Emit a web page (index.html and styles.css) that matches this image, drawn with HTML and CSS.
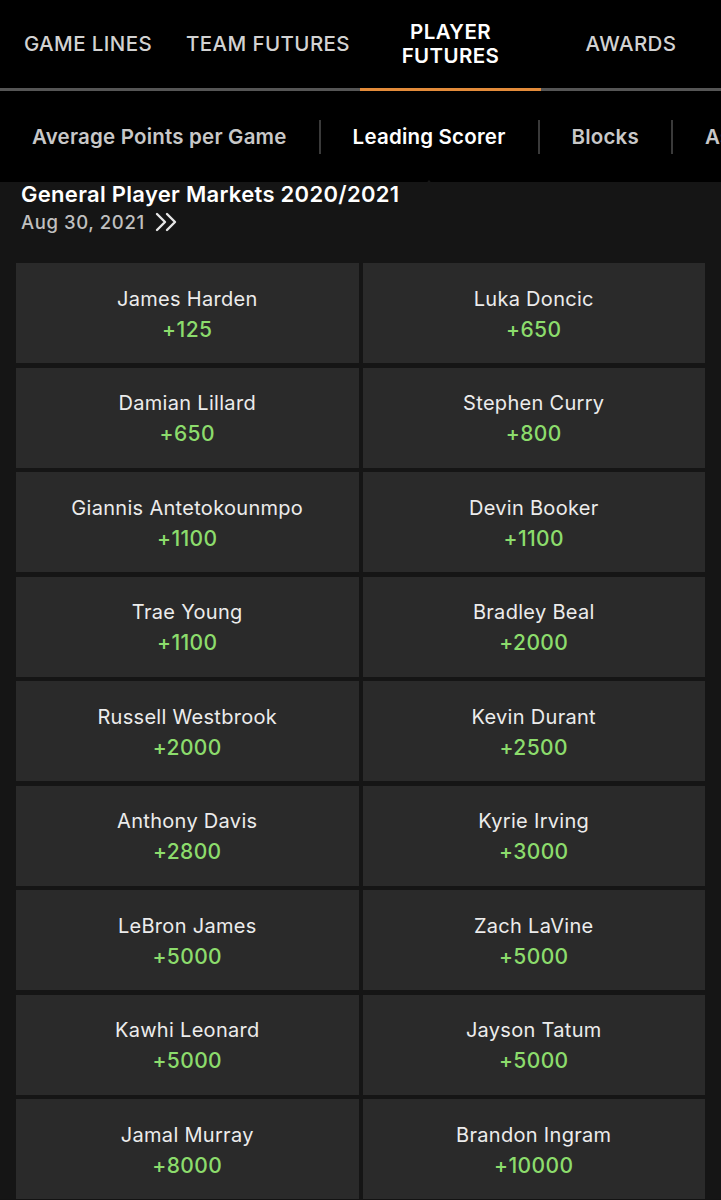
FILE: index.html
```html
<!DOCTYPE html>
<html lang="en">
<head>
<meta charset="utf-8">
<title>Player Futures</title>
<link rel="stylesheet" href="styles.css">
</head>
<body>
<nav class="tabs">
  <div class="tab t1">GAME LINES</div>
  <div class="tab t2">TEAM FUTURES</div>
  <div class="tab t3 active">PLAYER<br>FUTURES</div>
  <div class="tab t4">AWARDS</div>
</nav>
<div class="subtabs">
  <div class="sub">Average Points per Game</div>
  <div class="sep"></div>
  <div class="sub active">Leading Scorer</div>
  <div class="sep"></div>
  <div class="sub">Blocks</div>
  <div class="sep"></div>
  <div class="sub">Assists</div>
</div>
<main class="content">
  <header class="head">
    <h1 class="title">General Player Markets 2020/2021</h1>
    <div class="date">Aug 30, 2021
      <svg class="chev" width="24" height="20" viewBox="0 0 24 20"><path d="M2 2 L10 10 L2 18 M12 2 L20 10 L12 18" fill="none" stroke="#e6e6e6" stroke-width="2.4" stroke-linecap="round" stroke-linejoin="round"/></svg>
    </div>
  </header>
  <section class="grid">
    <div class="card"><div class="name">James Harden</div><div class="odds">+125</div></div>
    <div class="card"><div class="name">Luka Doncic</div><div class="odds">+650</div></div>
    <div class="card"><div class="name">Damian Lillard</div><div class="odds">+650</div></div>
    <div class="card"><div class="name">Stephen Curry</div><div class="odds">+800</div></div>
    <div class="card"><div class="name">Giannis Antetokounmpo</div><div class="odds">+1100</div></div>
    <div class="card"><div class="name">Devin Booker</div><div class="odds">+1100</div></div>
    <div class="card"><div class="name">Trae Young</div><div class="odds">+1100</div></div>
    <div class="card"><div class="name">Bradley Beal</div><div class="odds">+2000</div></div>
    <div class="card"><div class="name">Russell Westbrook</div><div class="odds">+2000</div></div>
    <div class="card"><div class="name">Kevin Durant</div><div class="odds">+2500</div></div>
    <div class="card"><div class="name">Anthony Davis</div><div class="odds">+2800</div></div>
    <div class="card"><div class="name">Kyrie Irving</div><div class="odds">+3000</div></div>
    <div class="card"><div class="name">LeBron James</div><div class="odds">+5000</div></div>
    <div class="card"><div class="name">Zach LaVine</div><div class="odds">+5000</div></div>
    <div class="card"><div class="name">Kawhi Leonard</div><div class="odds">+5000</div></div>
    <div class="card"><div class="name">Jayson Tatum</div><div class="odds">+5000</div></div>
    <div class="card"><div class="name">Jamal Murray</div><div class="odds">+8000</div></div>
    <div class="card"><div class="name">Brandon Ingram</div><div class="odds">+10000</div></div>
  </section>
</main>
</body>
</html>
```
FILE: styles.css
```css
* { box-sizing: border-box; }
html, body { margin: 0; padding: 0; }
body {
  width: 721px;
  height: 1200px;
  overflow: hidden;
  background: #131313;
  font-family: Inter, "Noto Sans", "Liberation Sans", sans-serif;
  -webkit-font-smoothing: antialiased;
}
.tabs {
  display: flex;
  height: 91px;
  background: #000;
  border-bottom: 3px solid #555;
}
.tab {
  display: flex;
  align-items: center;
  justify-content: center;
  text-align: center;
  color: #d2d2d2;
  font-size: 20.5px;
  font-weight: 500;
  letter-spacing: 0.4px;
  line-height: 24px;
  margin-bottom: -3px;
  border-bottom: 3px solid transparent;
  padding-top: 0;
}
.t1 { width: 176px; }
.t2 { width: 184px; }
.t3 { width: 181px; }
.t4 { width: 180px; }
.tab.active {
  color: #fff;
  font-weight: 600;
  border-bottom: 4px solid #e38b3a;
  margin-bottom: -4px;
  padding-bottom: 1px;
}
.subtabs {
  display: flex;
  align-items: center;
  height: 91px;
  background: #000;
  white-space: nowrap;
  overflow: hidden;
  position: relative;
}
.sub {
  padding: 0 32px;
  color: #c8c8c8;
  font-size: 20.5px;
  font-weight: 600;
  letter-spacing: 0.2px;
  line-height: 24px;
  position: relative;
  flex: none;
}
.sub.active { color: #fff; }
.sub.active::after {
  content: "";
  position: absolute;
  left: 50%;
  bottom: -45px;
  margin-left: -12px;
  border-left: 12px solid transparent;
  border-right: 12px solid transparent;
  border-bottom: 14px solid #171717;
}
.sep {
  width: 2px;
  height: 34px;
  background: #3a3a3a;
  flex: none;
}
.content {
  background: #151515;
  padding: 0 16px;
}
.head {
  padding: 0 5px;
  height: 81px;
}
.title {
  margin: 0;
  padding-top: 0;
  color: #fff;
  font-size: 22px;
  font-weight: 600;
  line-height: 24px;
  letter-spacing: 0.3px;
}
.date {
  display: flex;
  align-items: center;
  gap: 10px;
  color: #c0c0c0;
  font-size: 18.5px;
  font-weight: 500;
  letter-spacing: 0.6px;
  line-height: 22px;
  margin-top: 5px;
}
.chev { display: block; }
.grid {
  display: grid;
  grid-template-columns: 1fr 1fr;
  column-gap: 4px;
  row-gap: 4.5px;
}
.card {
  height: 100px;
  background: #2a2a2a;
  display: flex;
  flex-direction: column;
  align-items: center;
  justify-content: center;
  gap: 5px;
  padding-top: 2px;
}
.name {
  color: #ececec;
  font-size: 20px;
  font-weight: 400;
  letter-spacing: 0.3px;
  line-height: 26px;
}
.odds {
  color: #8cdc6c;
  font-size: 21px;
  font-weight: 500;
  letter-spacing: 0.4px;
  line-height: 26px;
}
```
